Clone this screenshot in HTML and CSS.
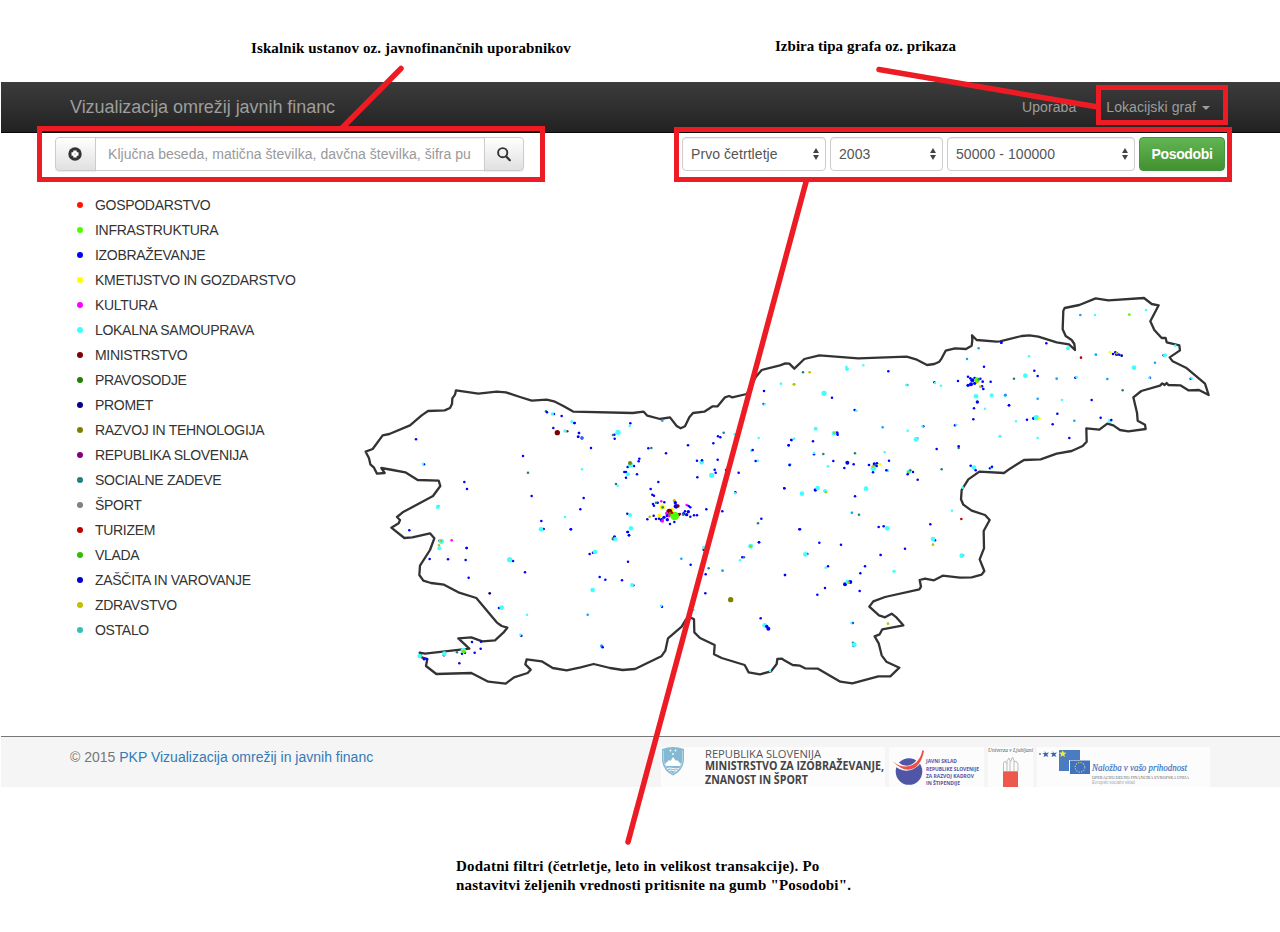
FILE: index.html
```html
<!DOCTYPE html>
<html lang="sl">
<head>
<meta charset="utf-8">
<title>Vizualizacija omrežij javnih financ</title>
<link rel="stylesheet" href="styles.css">
</head>
<body>
<div class="page">
  <header class="navbar">
    <a class="brand">Vizualizacija omrežij javnih financ</a>
    <nav class="nav">
      <a class="nav-use">Uporaba</a>
      <a class="nav-graph">Lokacijski graf <i class="caret"></i></a>
    </nav>
  </header>
  <section class="toolbar">
    <div class="search">
      <button class="btn btn-left" aria-label="Počisti"><svg width="14" height="14" viewBox="0 0 14 14"><circle cx="7" cy="7" r="6.700" fill="#333"/><path d="M7 3.500v7M3.500 7h7" stroke="#fff" stroke-width="3.400"/><path d="M6.300 7h1.400" stroke="#888" stroke-width="1"/></svg></button>
      <input class="query" placeholder="Ključna beseda, matična številka, davčna številka, šifra pu">
      <button class="btn btn-right" aria-label="Išči"><svg width="14" height="15" viewBox="0 0 14 15"><circle cx="5.700" cy="5.700" r="4.600" fill="none" stroke="#333" stroke-width="1.900"/><path d="M9.200 9.400l3.600 3.800" stroke="#333" stroke-width="2.200" stroke-linecap="round"/></svg></button>
    </div>
    <div class="filters">
      <div class="select quarter"><span>Prvo četrtletje</span><svg width="6" height="12" viewBox="0 0 6 12"><path d="M0 5L3 0l3 5zM0 7h6l-3 5z" fill="#444"/></svg></div>
      <div class="select year"><span>2003</span><svg width="6" height="12" viewBox="0 0 6 12"><path d="M0 5L3 0l3 5zM0 7h6l-3 5z" fill="#444"/></svg></div>
      <div class="select amount"><span>50000 - 100000</span><svg width="6" height="12" viewBox="0 0 6 12"><path d="M0 5L3 0l3 5zM0 7h6l-3 5z" fill="#444"/></svg></div>
      <button class="update">Posodobi</button>
    </div>
  </section>
  <main class="content">
    <ul class="legend" id="legend"></ul>
    <svg class="map" id="map" width="900" height="540" viewBox="340 192 900 540"></svg>
  </main>
  <footer class="footer">
    <p class="copy">© 2015 <a>PKP Vizualizacija omrežij in javnih financ</a></p>
    <div class="logos">
      <svg width="224" height="40" viewBox="-1 0 224 40" class="logo">
        <path d="M0 2Q11-2 22 2V13Q21 24 11 28.500Q1 24 0 13Z" fill="#85b8d1"/><path d="M1.500 3.500V13Q3 23 11 26.500 19 23 20.500 13V3.500" fill="none" stroke="#c8e0ea" stroke-width=".7"/>
        <path d="M3 17l4-4 1.500 1L11 10l3 4 1-1 4 4-1 2H4z" fill="#fff"/><path d="M5 21.500q3-1 6 0t6 0M7 23.500q2-1 4 0t4 0" stroke="#fff" fill="none"/><circle cx="8.500" cy="3.500" r=".9" fill="#fff"/><circle cx="13.500" cy="3.500" r=".9" fill="#fff"/><circle cx="11" cy="7" r=".9" fill="#fff"/>
        <g class="min"><text x="43" y="10.500" textLength="116" lengthAdjust="spacingAndGlyphs">REPUBLIKA SLOVENIJA</text><text class="b" x="43" y="23.300" textLength="179" lengthAdjust="spacingAndGlyphs">MINISTRSTVO ZA IZOBRAŽEVANJE,</text><text class="b" x="43" y="37" textLength="103" lengthAdjust="spacingAndGlyphs">ZNANOST IN ŠPORT</text></g>
      </svg>
      <svg width="95" height="40" viewBox="0 0 95 40" class="logo">
        <circle cx="20" cy="24.500" r="13.300" fill="#4f56a6"/><path d="M5 15Q14 24 23 20T34 3" fill="none" stroke="#fcfcfc" stroke-width="5"/><path d="M4 14.500Q13 22 22 18.500T33.500 3L35 4Q32 19 23 22T4 14.500z" fill="#ec5045"/>
        <g class="fund"><text x="37" y="16" textLength="31" lengthAdjust="spacingAndGlyphs">JAVNI SKLAD</text><text x="37" y="23.500" textLength="53" lengthAdjust="spacingAndGlyphs">REPUBLIKE SLOVENIJE</text><text x="37" y="31" textLength="48" lengthAdjust="spacingAndGlyphs">ZA RAZVOJ KADROV</text><text x="37" y="38.300" textLength="34" lengthAdjust="spacingAndGlyphs">IN ŠTIPENDIJE</text></g>
      </svg>
      <svg width="45" height="40" viewBox="0 0 45 40" class="logo">
        <text class="uni" x="0" y="4.600" textLength="45" lengthAdjust="spacingAndGlyphs">Univerza v Ljubljani</text>
        <path d="M15.500 24V16l1.500-2 2 3v-3l2-3 1.500 4 2-5 2 5 1.500-1 2 3V24M19 17v7M22 15v9M26 14v10" fill="none" stroke="#bdbdbd" stroke-width="1"/><path d="M15 25h15v15H15z" fill="#ee574c"/><path d="M15 24.500h15" stroke="#765" stroke-width=".6"/>
      </svg>
      <svg width="173" height="40" viewBox="0 0 173 40" class="logo">
        <path d="M22 3h21v10H32v11H22z" fill="#4b7cc1"/><path d="M33 13.500h20V27H33z" fill="#4272bd"/><circle cx="43" cy="20.300" r="4.800" fill="none" stroke="#d4d877" stroke-width="1.100" stroke-dasharray="1.100 1.410"/>
        <path d="M25.700 3l1 2.600 2.800.1-2.200 1.700.8 2.700-2.400-1.500-2.300 1.500.7-2.700-2.100-1.700 2.800-.1z" fill="#f7ec34"/><path d="M15.500 4l1.500 2 3-.5-1.800 2.200 1.300 2.300-2.500-1-2.500 1 .8-2.400-2-1.700 2.500.2zM7.500 4l1.500 2 3-.5-1.800 2.200 1.300 2.300-2.500-1-2.500 1 .8-2.400-2-1.700 2.500.2z" fill="#3c66b0"/><circle cx="3" cy="7" r=".9" fill="#4a6fb5"/>
        <text class="invest" x="55" y="24" textLength="95" lengthAdjust="spacingAndGlyphs">Naložba v vašo prihodnost</text><text class="op" x="55" y="31.500" textLength="97" lengthAdjust="spacingAndGlyphs">OPERACIJO DELNO FINANCIRA EVROPSKA UNIJA</text><text class="esf" x="55" y="36.500" textLength="43" lengthAdjust="spacingAndGlyphs">Evropski socialni sklad</text>
      </svg>
    </div>
  </footer>
  <svg class="callouts" width="1280" height="932" viewBox="0 0 1280 932">
    <g fill="none" stroke="#ed1c24" stroke-width="5">
      <path d="M39.500 128.500h503v51h-503zM676.500 129.500h553v50h-553zM1098.500 87.500h127v35h-127z"/>
      <path d="M401 68.500L342 128M879 69.500l219 37.500M806 182L628 842" stroke-width="5.500" stroke-linecap="round"/>
    </g>
  </svg>
  <p class="note note-search">Iskalnik ustanov oz. javnofinančnih uporabnikov</p>
  <p class="note note-type">Izbira tipa grafa oz. prikaza</p>
  <p class="note note-filters">Dodatni filtri (četrletje, leto in velikost transakcije). Po<br>nastavitvi željenih vrednosti pritisnite na gumb "Posodobi".</p>
</div>
<script src="map.js"></script>
</body>
</html>
```
FILE: styles.css
```css
* { box-sizing: border-box; }
body { margin: 0; background: #fff; color: #333; font: 14px/20px "Liberation Sans", Arial, sans-serif; }
p, ul { margin: 0; padding: 0; }
.page { position: relative; height: 932px; padding: 82px 0 0 1px; overflow: hidden; }
.navbar { height: 51px; display: flex; justify-content: space-between; align-items: center; padding: 0 70px 0 69px; background: linear-gradient(#3c3c3c, #222); border-bottom: 1px solid #080808; color: #9d9d9d; }
.brand { font-size: 18px; letter-spacing: -0.05px; }
.nav { display: flex; gap: 30px; letter-spacing: 0.07px; }
.caret { display: inline-block; margin-left: 2px; vertical-align: middle; border: 4px solid transparent; border-top-color: #9d9d9d; border-bottom: 0; }
.toolbar { height: 55px; display: flex; justify-content: space-between; padding: 4px 55px 0 54px; }
.search { display: flex; width: 469px; height: 34px; }
.btn { width: 41px; padding: 0; display: flex; align-items: center; justify-content: center; border: 1px solid #ccc; background: linear-gradient(#fff, #e0e0e0); box-shadow: 0 1px 1px rgba(0,0,0,.08); }
.btn-left { padding-right: 2px; border-radius: 4px 0 0 4px; }
.btn-right { width: 40px; border-radius: 0 4px 4px 0; }
.query { flex: 1; min-width: 0; margin: 0 -1px; padding: 0 12px; border: 1px solid #ccc; font: inherit; letter-spacing: 0.045px; box-shadow: inset 0 1px 1px rgba(0,0,0,.075); }
.query::placeholder { color: #999; opacity: 1; }
.filters { display: flex; gap: 4px; height: 34px; }
.select { display: flex; align-items: center; justify-content: space-between; padding: 0 6px 0 8px; border: 1px solid #ccc; border-radius: 4px; color: #555; letter-spacing: 0.07px; box-shadow: inset 0 1px 1px rgba(0,0,0,.075); }
.quarter { width: 144px; }
.year { width: 113px; }
.amount { width: 188px; }
.update { width: 86px; padding: 0; border: 1px solid #419641; border-radius: 4px; background: linear-gradient(#62b553, #439130); color: #fff; font: bold 14px "Liberation Sans", Arial, sans-serif; letter-spacing: -0.35px; }
.content { height: 548px; display: flex; padding: 4px 0 0 75px; }
.legend { width: 264px; list-style: none; letter-spacing: -0.3px; }
.legend li { height: 25px; display: flex; align-items: center; gap: 12px; padding-left: 1px; white-space: nowrap; }
.legend i { width: 6px; height: 6px; border-radius: 50%; }
.map { flex: none; }
.footer { height: 51px; display: flex; justify-content: space-between; padding: 10px 70px 0 69px; border-top: 1px solid #777; background: #f5f5f5; color: #777; }
.copy a { color: #337ab7; }
.logos { display: flex; gap: 4px; }
.logo { flex: none; background: #fcfcfc; overflow: visible; }
.min { font: 11.6px "Open Sans", sans-serif; fill: #555; }
.min .b { font-weight: bold; fill: #444; }
.fund { font: bold 5.6px "Open Sans", sans-serif; fill: #4f56a6; }
.uni { font: italic 6px "Liberation Serif", serif; fill: #555; }
.invest { font: italic 10.5px "Liberation Serif", serif; fill: #3b72bd; stroke: #3b72bd; stroke-width: .2px; }
.op { font: 5px "Liberation Serif", serif; fill: #666; }
.esf { font: 4.6px "Liberation Sans", sans-serif; fill: #aaa; }
.callouts { position: absolute; left: 0; top: 0; pointer-events: none; }
.note { position: absolute; color: #000; font: bold 15px/19px "Liberation Serif", "Times New Roman", serif; white-space: nowrap; }
.note-search { left: 251px; top: 39px; letter-spacing: 0.11px; }
.note-type { left: 775px; top: 37px; letter-spacing: 0.02px; }
.note-filters { left: 456px; top: 857px; letter-spacing: 0.18px; }
.note-filters::first-line { letter-spacing: 0.22px; }
```
FILE: map.js
```js
const legend = [
  ['GOSPODARSTVO', '#ff1500'], ['INFRASTRUKTURA', '#4cff00'], ['IZOBRAŽEVANJE', '#0000ff'],
  ['KMETIJSTVO IN GOZDARSTVO', '#ffff00'], ['KULTURA', '#ff00ff'], ['LOKALNA SAMOUPRAVA', '#40ffff'],
  ['MINISTRSTVO', '#7f0000'], ['PRAVOSODJE', '#208000'], ['PROMET', '#00008b'],
  ['RAZVOJ IN TEHNOLOGIJA', '#808000'], ['REPUBLIKA SLOVENIJA', '#800080'], ['SOCIALNE ZADEVE', '#208080'],
  ['ŠPORT', '#808080'], ['TURIZEM', '#bf0000'], ['VLADA', '#30c000'],
  ['ZAŠČITA IN VAROVANJE', '#0000cc'], ['ZDRAVSTVO', '#c0c000'], ['OSTALO', '#30c0b8']
];
document.getElementById('legend').innerHTML = legend
  .map(([name, color]) => `<li><i style="background:${color}"></i>${name}</li>`).join('');

// Map tiles: origin followed by points in thirds of a pixel.
const border = [
  [350, 370, '668,124 640,108 612,94 590,89 545,92 510,81 468,67 440,65 385,71 318,61 315,74 307,85 306,102 300,114 284,121 234,123 215,136 180,166 118,192 98,196 68,237 47,245 57,265 61,283 72,293 81,311 104,309 94,294 128,300 166,307 203,330 266,332 271,348 249,378 158,427 141,441 150,450 146,460 124,473 163,504 187,502 240,490 253,505'],
  [350, 530, '240,60 210,107 208,135 220,152 243,159 282,164 325,187 379,204 440,277 455,288 472,293 460,308 435,331 397,334 364,322 325,325 358,356 225,371 209,368 215,382 232,387 228,408 259,432 364,429 415,455 467,461 492,442 533,429 542,419 526,403 530,388 575,394 608,414 650,421'],
  [570, 530, '32,412 71,402 120,414 158,420 195,417 274,379 286,362 294,325 335,290 348,268 360,262 372,268 373,307 390,324 434,345 432,373 455,384 524,405 536,427 570,433 603,424 620,402 622,387 636,386'],
  [780, 510, '10,449 38,465 60,467 75,475 114,476 181,515 217,520 295,499 331,499 358,473 319,455 305,436 296,400 284,379 299,373 307,358 370,346 350,323 335,311 315,322 297,316 268,290 280,274 315,261 418,238 423,230 419,210 435,206 462,211 488,197 540,203 575,202 605,194 613,183 599,148 612,115 611,63 629,30 615,15'],
  [780, 340, '575,512 550,494 543,478 545,450 565,418 598,395 672,399'],
  [1000, 280, '30,566 72,540 122,538 170,521 215,513 248,498 260,485 259,445 298,449 322,431 340,436 360,450 385,454 437,447 435,434 413,422 411,398 400,352 424,333 480,317 487,310 494,315 500,309 505,315 541,316 565,331 597,330 626,345 615,311 558,263 518,244 509,232 540,211 538,196 500,187 497,174 485,174 463,150 451,124 476,76 455,72 432,54 325,61 287,55 238,75 194,84 190,92 188,148 197,168 215,180 223,192 225,210 207,193 170,187 115,170 88,166 65,168 0,184'],
  [780, 340, '650,5 590,0 576,-14 577,0 575,17 558,27 525,25 497,32 485,55 478,65 463,72 441,75 408,58 380,50 235,55 118,46 73,57 43,86 28,71 16,70 0,76'],
  [570, 370, '575,0 558,20 530,72 487,82 477,78 465,82 443,109 428,109 403,125 369,129 358,142 345,169 332,175 320,168 300,142 270,147 232,137 221,125 188,129 10,125']
];

const colors = { b: '#0000ff', c: '#40ffff', t: '#208080', y: '#ffff00', z: '#c0c000', m: '#ff00ff', d: '#7f0000', g: '#4cff00', o: '#808000', r: '#c00000', p: '#800080', n: '#00008b', s: '#1aa0ff' };
// Each entry: colour key, x, y and an optional radius.
const places = [
  [350, 370, 't588,124 b591,127 b612,132 c607,132,5 b635,138 b673,159 c665,155,4 b610,174 d622,188,8 r652,184 c645,183,5 b687,189 b684,200 b198,208 b222,283 c219,281 b519,258 t534,308 b343,336 b351,357 b545,378 s265,408 c263,411,6 b574,453 c645,441 b581,477 c573,478,7 b663,478 b178,481 t268,512 c274,514,8 z273,513,4 m305,511 z267,526 c268,535,6 b350,534'],
  [350, 530, 'b350,54 b239,87 b294,88 b347,90 b356,143 b489,93,4 c479,89,8 b525,127 n419,190,4 b447,234 c455,233,7 c531,254 b514,317 c511,314 b366,336 b393,335 b392,356 b374,368 b328,400 b282,376 c283,371,7 t321,367 b336,371 b345,368 c340,361,8 g342,365,5 z340,363 b222,388 b230,387 c209,378,7'],
  [570, 370, 'c5,155 b14,159 s277,152,4 b181,160 c179,168 b27,189 b25,200 b36,204,5 c36,204,2.5 b133,194 b134,206 t129,195 c144,187,8 b63,234 b235,235 t244,234 b288,250 b354,226 b430,220 b444,199 b451,202 t461,188 b208,266 b206,274 b173,291 b192,288 c182,284,8 o180,279,6 b168,306 b163,306 c174,313,6 b168,323 b201,313 c36,298 t138,342 c143,347 b265,336 b242,357 b247,374 b252,377 b41,384 b31,418 b381,272 c395,277,7 b396,271 b443,269 b434,299 b437,308 c425,316,8 b382,322 b409,418 b172,431 c180,435,6 c183,475,7 b174,486 b177,496 t129,505 b133,500 c136,506,6 b2,478 b688,478 b468,300 c494,193 b506,308 b457,424 b574,446 t564,460 b567,517 c542,528,7 z542,528 c402,533,5 b496,367 c495,370 c633,41 z672,43,4 b582,63 b581,102 c584,103 c566,204 b664,210 c672,206 b656,226 c544,242 b548,240 b557,273 c564,272 c661,283 b659,285 b643,355 b249,402 b252,407 b263,398 b283,397 m274,394 t258,398 z313,392,5 y277,411,8 t278,412,4 b316,398,5 b318,409,7 d324,408,5 y307,418,6 d298,425,9 m290,430,5 b292,437,5 m298,437,5 d326,434,5 o302,432,7 g314,438,13 r306,428 b282,442,5 y268,437,6 b275,450,6 m277,453,5 b292,449,5 b300,462 b313,456 b232,448 z239,440 b251,437 b258,447 b267,446 m350,405 b356,408 b361,412 b345,424 b355,425,5 b341,431,5 b350,434,5 t340,434,4 b361,440 b372,436 b381,436 p330,432,4'],
  [570, 530, 'b172,6 b177,16 b134,20 t129,28 c136,27,6 b59,72 b69,68 c75,66,7 b174,95 b89,141 b106,149 b156,151 b190,166 c186,165,6 c68,180,7 s53,254 b276,230 c273,227 s95,348,5 b98,352 s334,86 b362,104 b401,59 c402,53,5 t416,115 b407,133 b406,190 c371,240 c457,121,4 s458,122 b517,82 t522,82 c510,91 c542,49,7 z542,49,4 b567,37 b645,135 o482,209,8 b572,265 c584,286,7 b590,289,5 b595,296,6 c600,423'],
  [780, 340, 't69,97 z89,97,4 c3,131 z42,133,4 c201,87,6 c199,80 c250,76 b325,94 b156,173 c132,160,8 s382,135 c379,135 b463,127 c465,129 c483,137 s561,57 b224,210 c229,212 s596,25 b664,8 b612,80 b534,123 c107,266,6 b171,279,5 b173,284 c162,280,7 z163,279,4 b34,300 c42,296 b26,316 b99,304 b102,343 c102,339 t130,342 c29,373 b29,375 b160,363 b202,368,6 b193,384 b221,373 c144,379,4 t225,340 s308,262 c383,272 b430,259 c427,259 s412,295 c408,298,7 c314,337 b327,362 c323,392,5 b319,391 b267,375,4 b283,372,5 b291,370 t287,375 c280,385,8 z279,379,4 b290,378 b279,397 y300,373,4 c386,396,7 t391,391 z385,397,4 b383,403 b399,396 b413,419 b470,327 t536,324 b536,319 b525,256 c529,254 b580,238 b582,205 b592,186,5 c615,206 c588,169,7 c635,166,6 b632,125 c677,167 b676,165 b687,196 s660,289 t485,388 b572,377 c582,383,7 b587,391 b630,385 c635,383 b636,380 c548,443,4 b13,445 b106,450,5 c113,444,7 c66,461,7 c135,453,6 z138,457 b225,469 c258,446,7 c215,518 s216,518 t237,524 c516,512 r544,537 b564,110 b571,115,4 b577,121,6 b584,114,4 b564,136,5 b573,133,6 b584,130,5 b601,116 b608,125,4 b606,139,4 b610,147,4 g591,120,8 z592,126,4 z601,140,4 t597,118'],
  [1000, 280, 'b4,188 b139,190 c204,205,6 s241,105,4 c285,105 g388,104,4 c438,90 c526,197,4 b491,226 c495,226,6 s465,248 b450,293 c448,293 c402,263,7 y330,217,4 b339,222 b346,217,4 b350,222,6 b358,224 n365,227,4 z350,220 r243,233,4 c287,223 s288,224 c87,229 b103,272 b113,288 c76,287,7 t42,296 s170,296,4 b226,293 c230,292 s322,297,4 t368,331 b572,296 c575,295 s15,346 b27,376 s113,356 c186,360 b275,360 b172,401 b81,419 c48,424 b101,415,5 c109,413,8 y118,415 b158,433 s223,422 b302,413 c330,422,6 b334,420 c113,474 b208,474 c0,469'],
  [780, 510, 'b60,58 b118,98 b183,104 b82,132 c76,133,7 b296,51 b311,49 c322,55,7 b451,43 b465,91 c459,87,7 z459,104,4 s549,136 c545,137,7 b375,116 c301,134,4 b302,135 b144,169 c137,173 b255,169 b241,190 c342,184,5 b15,195 b195,223,6 c202,215,6 b211,216,6 z206,218,4 b239,243 b135,234 b112,254 b218,339 c214,339 t219,398 b221,408 c223,404,7 z324,341,4']
];

const px = (o, v) => (o + v / 3).toFixed(2);
const line = border.map(([ox, oy, s]) => s.split(' ').map(p => {
  const [x, y] = p.split(',').map(Number);
  return px(ox, x) + ',' + px(oy, y);
}).join(' ')).join(' ');
const dots = places.map(([ox, oy, s]) => s.split(' ').map(p => {
  const [x, y, r = 3.8] = p.slice(1).split(',').map(Number);
  return `<circle cx="${px(ox, x)}" cy="${px(oy, y)}" r="${(r / 3).toFixed(2)}" fill="${colors[p[0]]}"/>`;
}).join('')).join('');
document.getElementById('map').innerHTML =
  `<polygon points="${line}" fill="none" stroke="#333" stroke-width="2.3" stroke-linejoin="round"/>${dots}`;
```
